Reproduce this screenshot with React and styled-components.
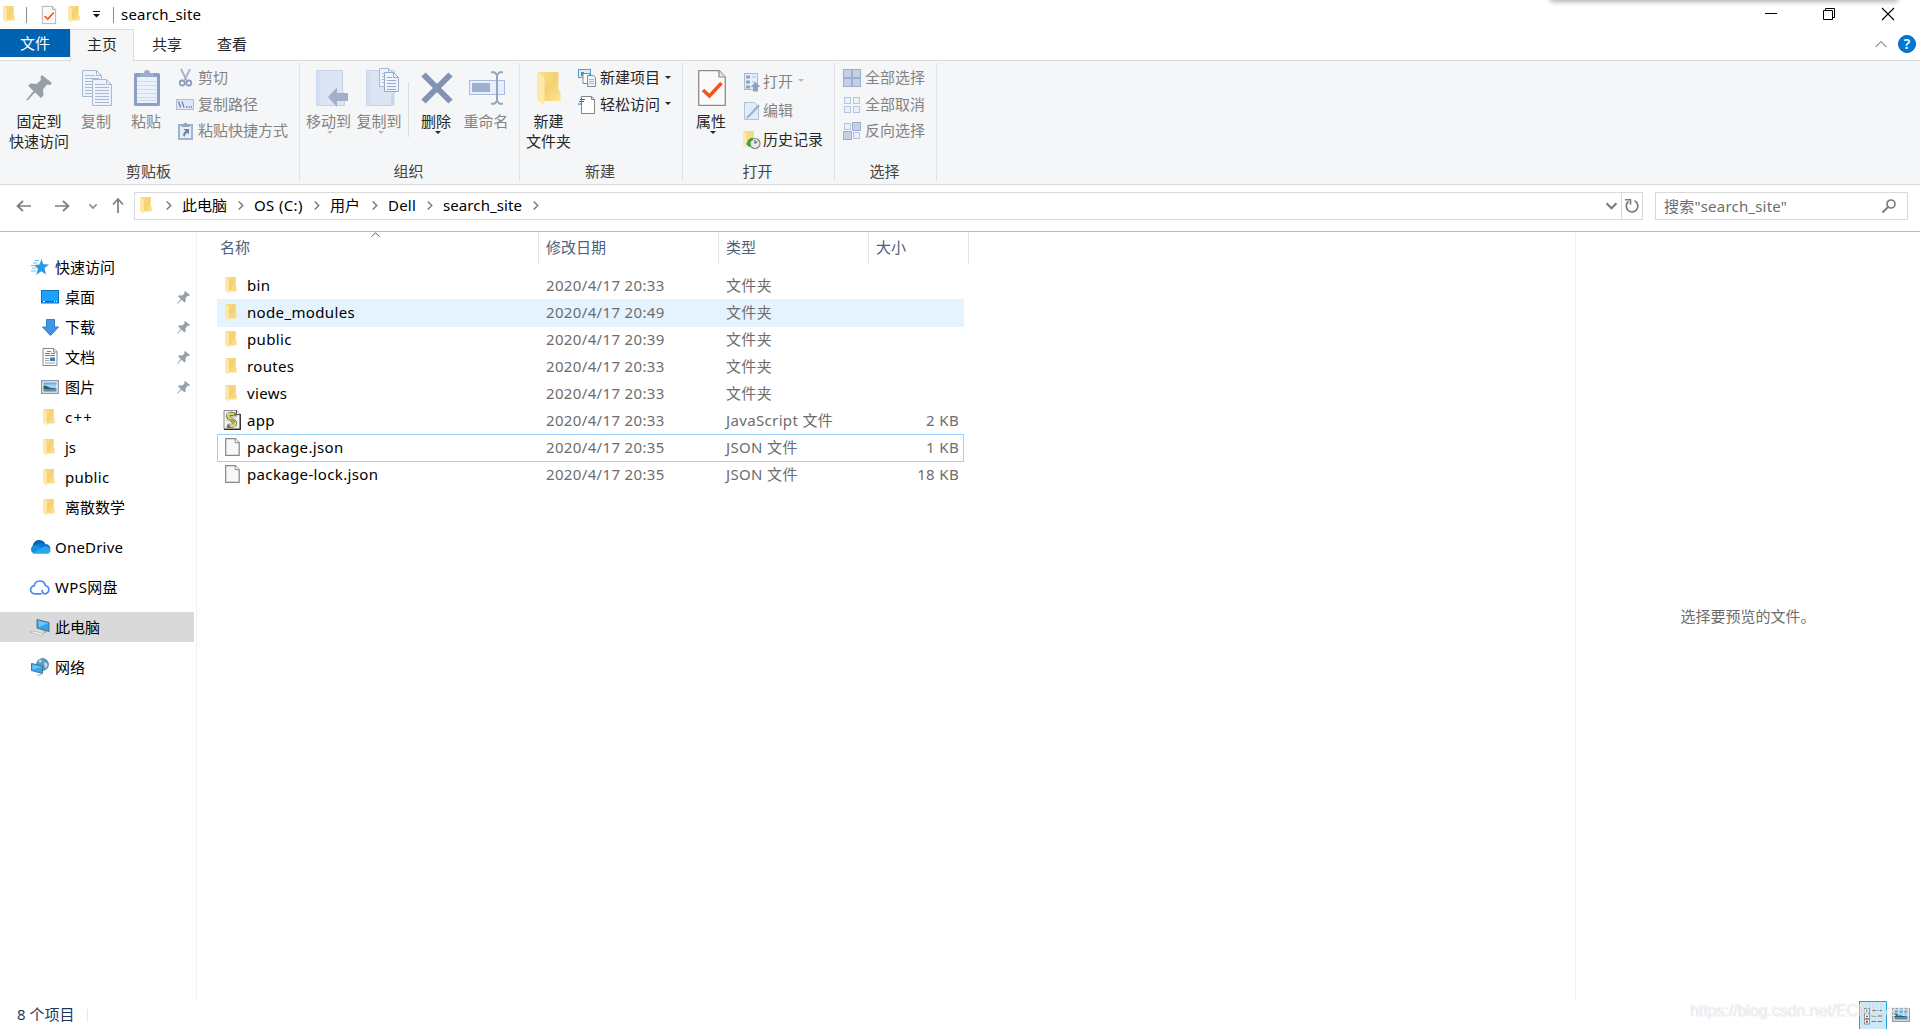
import React from 'react';
import styled, { createGlobalStyle } from 'styled-components';

const GlobalStyle = createGlobalStyle`
  * { box-sizing: border-box; }
  html, body, #root { height: 100%; }
  body {
    margin: 0;
    overflow: hidden;
    background: #fff;
    color: #000;
    font: 15px/20px "Noto Sans", "Noto Sans CJK SC", sans-serif;
    white-space: nowrap;
  }
`;

/* ---------- icons ---------- */

const Svg = styled.svg`
  display: block;
  flex: none;
  overflow: visible;
`;

const Icon = ({ w, h, box, children, ...rest }) => (
  <Svg width={w} height={h} viewBox={box || `0 0 ${w} ${h}`} fill="none" {...rest}>{children}</Svg>
);

const FolderIcon = ({ w = 12, h = 17 }) => (
  <Icon w={w} h={h} box="0 0 24 34" preserveAspectRatio="none">
    <defs>
      <linearGradient id="folderBack" x1="0" y1="0" x2="1" y2="1">
        <stop offset="0" stopColor="#fbdf8e" />
        <stop offset=".5" stopColor="#f3d171" />
        <stop offset="1" stopColor="#ffe394" />
      </linearGradient>
    </defs>
    <path d="M1 0h20.500v18l2 2v9H7L1 27z" fill="url(#folderBack)" />
    <path d="M0 0l7.500 5.500V34L0 28z" fill="#ffe9a8" />
  </Icon>
);

const PinIcon = ({ size = 26 }) => (
  <Icon w={size} h={size} box="0 0 26 26">
    <path d="M16 0l10 8-2 2-3-.5-4 5 .5 6-2.500 2.500-6-5.500-7.500 8L0 25l7.500-9L2 10.500l2.500-2 6 .5 4.500-4L14.500 2z" fill="#95a0a8" />
  </Icon>
);

const Sheet = ({ x = 0, y = 0, w = 19, h = 26, stroke = '#a9b9d4', fill = '#eef3fb' }) => (
  <g transform={`translate(${x} ${y})`}>
    <path d={`M.5 .5h${w - 6}l5 5v${h - 6}H.5z`} fill={fill} stroke={stroke} />
    <path d={`M${w - 5.5} .5v5h5`} stroke={stroke} />
    {[8, 11, 14, 17, 20, 23].filter(n => n < h - 2).map(n => (
      <path key={n} d={`M3 ${n + 0.5}h${w - 6}`} stroke={stroke} />
    ))}
    <path d={`M3 5.500h${w - 10}`} stroke={stroke} />
  </g>
);

const CopyIcon = () => (
  <Icon w={30} h={36}>
    <Sheet w={20} h={27} />
    <Sheet x={10} y={9} w={20} h={27} />
  </Icon>
);

const PasteIcon = () => (
  <Icon w={26} h={36}>
    <rect x="0" y="3" width="26" height="33" rx="1.500" fill="#8da0c3" />
    <rect x="3" y="7" width="20" height="26" fill="#eaf1fb" />
    {[11, 15, 19, 23, 27, 30].map(n => <path key={n} d={`M3 ${n}.500h20`} stroke="#cfdcef" />)}
    <path d="M6 3h4a3 3 0 0 1 6 0h4v4H6z" fill="#9cadc9" />
  </Icon>
);

const CutIcon = () => (
  <Icon w={13} h={18}>
    <path d="M2 0l5.500 11M11 0L5.500 11" stroke="#a3b3cd" strokeWidth="1.800" />
    <circle cx="3.200" cy="14" r="2.500" stroke="#8c9dbb" strokeWidth="1.800" />
    <circle cx="9.800" cy="14" r="2.500" stroke="#8c9dbb" strokeWidth="1.800" />
  </Icon>
);

const PathIcon = () => (
  <Icon w={18} h={11}>
    <rect x=".5" y=".5" width="17" height="10" fill="#dde7f6" stroke="#aebdd8" />
    <path d="M2.500 2.500l2 6M6 2.500l2 6" stroke="#6d7f9f" strokeWidth="1.200" />
    <path d="M10 8h1.200M12.400 8h1.200M14.800 8H16" stroke="#6d7f9f" strokeWidth="1.300" />
  </Icon>
);

const ShortcutIcon = () => (
  <Icon w={15} h={18}>
    <path d="M1 3h13v14H1z" fill="#e6eefa" stroke="#a3b3cf" strokeWidth="2" />
    <path d="M3.500 2H6a1.500 1.500 0 0 1 3 0h2.500v3h-8z" fill="#94a6c6" />
    <path d="M5.500 7H11v5.500l-1.800-1.800c-1.500 1-2.200 2-2.400 4L5 13.500c.2-2 1-3.400 2.500-4.500z" fill="#6f83a8" />
  </Icon>
);

const MoveToIcon = () => (
  <Icon w={32} h={36}>
    <path d="M.5 .5h26v21l2 2v12H.5z" fill="#dbe5f4" stroke="#c3d2e9" />
    <path d="M.5 .5l4 2v33h-4z" fill="#d3dff1" />
    <path d="M12 27l9-9.500V23h11v8H21v6z" fill="#a0b0cb" />
  </Icon>
);

const CopyToIcon = () => (
  <Icon w={33} h={38}>
    <path d="M.5 2.500h28v23l-2 2v10H.5z" fill="#dbe5f4" stroke="#c3d2e9" />
    <path d="M.5 2.500l4 2v33h-4z" fill="#d3dff1" />
    <path d="M25 37V27l2-3 1.500 1.500V37z" fill="#c9d7ec" />
    <Sheet x={13} y={0} w={15} h={19} />
    <Sheet x={18} y={4} w={15} h={20} stroke="#98aac8" />
  </Icon>
);

const DeleteIcon = () => (
  <Icon w={32} h={32}>
    <path d="M2.500 2.500l27 27M29.500 2.500l-27 27" stroke="#8192b2" strokeWidth="6" />
  </Icon>
);

const RenameIcon = () => (
  <Icon w={36} h={34}>
    <rect x=".5" y="9.500" width="35" height="14" fill="#e6effb" stroke="#a9bcdb" />
    <rect x="3" y="12" width="18" height="9" fill="#9fb0cd" />
    <path d="M22 1.200h3.500L28 4l2.500-2.800H34M28 3v28M22 32.800h3.500L28 30l2.500 2.800H34" stroke="#94a5c3" strokeWidth="2" />
  </Icon>
);

const NewItemIcon = () => (
  <Icon w={18} h={18}>
    <rect x=".5" y=".5" width="12" height="8" fill="#d9f0fb" stroke="#4ea0c4" />
    <path d="M3 3h3v4H3z" fill="#4b94a8" />
    <path d="M5 4.500h6.500v10H5z" fill="#fff" stroke="#8a8a8a" />
    <path d="M9.500 6.500h6l2 2v9h-8z" fill="#eaf4fd" stroke="#8a8a8a" />
    <path d="M11 10.500h5M11 12.500h5M11 14.500h5" stroke="#8fbfe6" />
  </Icon>
);

const EasyAccessIcon = () => (
  <Icon w={18} h={18}>
    <path d="M3.500 .5h10l3 3v14h-13z" fill="#fff" stroke="#858585" />
    <path d="M13.500 .5v3h3" stroke="#858585" />
    <path d="M2 3.500h5M1 5.500h5M0 8h4" stroke="#1979ca" strokeWidth="1.200" />
  </Icon>
);

const CheckSheetIcon = ({ w = 28, h = 36 }) => (
  <Icon w={w} h={h} box="0 0 28 36" preserveAspectRatio="none">
    <path d="M.7 .7h20.500l6.100 6.300v28.300H.7z" fill="#fafafa" stroke="#8b8b8b" strokeWidth="1.300" />
    <path d="M21 .7V7h6.300" fill="#e6e6e6" stroke="#8b8b8b" strokeWidth="1.200" />
    <path d="M5 20l6.500 6L23.500 13" stroke="#f0561a" strokeWidth="3.400" />
  </Icon>
);

const OpenIcon = () => (
  <Icon w={17} h={18}>
    <rect x=".5" y=".5" width="13" height="16" fill="#e6eefa" stroke="#a9b9d6" />
    <path d="M2 2.500h4v3H2zM2 7.500h4v3H2zM2 12.500h4v3H2z" fill="#8fa1c0" />
    <path d="M8 4h4M8 9h4" stroke="#a9b9d6" />
    <path d="M11.500 9l5 5H14v4.500H9V14H6.500z" fill="#8fa1c0" />
  </Icon>
);

const EditIcon = () => (
  <Icon w={17} h={18}>
    <path d="M.5 .5h10l4 4v13H.5z" fill="#e2ebf8" stroke="#b3c2dc" />
    <path d="M3 14.500L14 2.500l2 1.500L5 15.500l-3 1.500z" fill="#a0b1ce" />
  </Icon>
);

const HistoryIcon = () => (
  <Icon w={18} h={18}>
    <path d="M0 0h11v15H2L0 14z" fill="#f8da80" />
    <path d="M0 0l3.500 3v14.500L0 15z" fill="#ffeaae" />
    <circle cx="12" cy="12.500" r="5" fill="#e9e9e9" stroke="#868686" strokeWidth="1.200" />
    <path d="M12 9v3.500l2.500-2" stroke="#555" />
    <path d="M5 14c0-4 2-6 5-6" stroke="#2fa53a" strokeWidth="2.400" />
    <path d="M3 12.500h5l-1.500 4z" fill="#2fa53a" />
  </Icon>
);

const Tiles = ({ on }) => (
  <Icon w={18} h={18}>
    {[[0, 0], [9, 0], [0, 9], [9, 9]].map(([x, y], i) => {
      const big = on[i];
      return (
        <rect
          key={i}
          x={x + (big ? 0.5 : 1.5)}
          y={y + (big ? 0.5 : 1.5)}
          width={big ? 8 : 6}
          height={big ? 8 : 6}
          fill={big ? '#c3d0e5' : '#eaf1fb'}
          stroke={big ? '#9cafce' : '#b5c5df'}
        />
      );
    })}
  </Icon>
);

const Chevron = ({ dir = 'right', size = 10, color = '#7a7a7a', weight = 1.6 }) => {
  const d = {
    right: 'M3 .5l4.500 4.500L3 9.500',
    down: 'M.5 3l4.500 4.500L9.500 3',
    up: 'M.5 7.500L5 3l4.500 4.500',
  }[dir];
  return (
    <Icon w={size} h={size} box="0 0 10 10">
      <path d={d} stroke={color} strokeWidth={weight} />
    </Icon>
  );
};

const StarIcon = () => (
  <Icon w={18} h={16}>
    <path d="M10.500 0l1.800 5.300 5.700.2-4.400 3.600 1.400 6.400-4.800-3.200-5 3.700 1.700-5.900L3.500 6l5-.5z" fill="#2b9ae6" />
    <path d="M4 1.500h4M2 4h4.500M0 6.500h4M1 9h4M0 12h5" stroke="#6dbcf0" />
  </Icon>
);

const DesktopIcon = () => (
  <Icon w={18} h={14}>
    <rect x=".5" y=".5" width="17" height="12.500" fill="#1fa2ff" stroke="#1173b8" />
    <path d="M1 11.500h16" stroke="#0d629e" />
    <path d="M2 11.500h2M13 11.500h1M15 11.500h1" stroke="#fff" />
  </Icon>
);

const DownloadIcon = () => (
  <Icon w={17} h={17}>
    <path d="M4.500 .5h8v7.500h4l-8 8.500-8-8.500h4z" fill="#3f95e6" stroke="#2f7fca" />
  </Icon>
);

const DocumentIcon = () => (
  <Icon w={16} h={18}>
    <path d="M1 .5h11l3 3v14H1z" fill="#fdfdfd" stroke="#85898d" />
    <path d="M11.500 .5v3.500H15" stroke="#85898d" />
    <path d="M5 3.500h4M3 5.500h5M9 5.500h4M3 7.500h10" stroke="#2f8fd6" />
    <path d="M3 10.500h4M3 12.500h4M3 15h10" stroke="#9aa0a5" />
    <rect x="8" y="9.500" width="5" height="3.500" fill="#3c7fae" />
  </Icon>
);

const PictureIcon = () => (
  <Icon w={18} h={14}>
    <rect x=".7" y=".7" width="16.600" height="12.600" fill="#fff" stroke="#8f9499" strokeWidth="1.300" />
    <path d="M2.500 2.500h13v9h-13z" fill="#a5d0f7" />
    <path d="M2.500 2.500h13v2h-13z" fill="#6ba6ee" />
    <path d="M2.500 5.500c3 0 5 2 8 2.500l5 .5v1h-13z" fill="#2e6152" />
    <path d="M2.500 9.500h13v2h-13z" fill="#4d8fb5" />
  </Icon>
);

const OneDriveIcon = () => (
  <Icon w={21} h={14}>
    <path d="M3 9a6.500 6.500 0 0 1 12.500-4.800L9 10z" fill="#0364b8" />
    <path d="M15 4a5 5 0 0 1 5.500 5L9 10l-2-5.500c3-1.800 5-1.500 8-.5z" fill="#0f78d4" />
    <path d="M4 13.500A4.500 4.500 0 1 1 7 5l9 6z" fill="#1490df" />
    <path d="M3 13l10-6a5 5 0 0 1 4 0 4 4 0 0 1 3.500 3c0 2.500-1.500 3.700-3.500 3.700H4z" fill="#28a8ea" />
  </Icon>
);

const WpsIcon = () => (
  <Icon w={20} h={16}>
    <path d="M11.500 14.800H5a4 4 0 0 1-.8-8 5.700 5.700 0 0 1 11.200-.3A4.200 4.200 0 0 1 15 14.800a2.700 2.700 0 0 1-2.500-4" stroke="#4a86f0" strokeWidth="1.700" />
  </Icon>
);

const PcIcon = () => (
  <Icon w={20} h={17}>
    <path d="M7 .5l12 3v9L7 9z" fill="#2fa5f2" stroke="#56707f" />
    <path d="M8 1.500l10 2.700L9 8z" fill="#6cc5fa" />
    <path d="M0 13l4-1 10 3-3 1.500z" fill="#f5f6f7" stroke="#aeb5ba" strokeWidth=".8" />
    <path d="M13 11l2 .5v2.500" stroke="#78868e" />
  </Icon>
);

const NetworkIcon = () => (
  <Icon w={18} h={18}>
    <circle cx="11.500" cy="6.500" r="6" fill="#5b9ec0" stroke="#4784a3" strokeWidth=".8" />
    <path d="M8 2c2-1 3 0 2.500 1.500S8 4.500 7.500 4zM13 5c2-1 3.500 0 3.500 2s-1.500 3-2.500 3z" fill="#b8dcea" />
    <path d="M.5 5.500l11 2.500v7.500L.5 12.500z" fill="#35a6ee" stroke="#3f7796" />
    <path d="M1.500 6.800l9 2-9 3z" fill="#6cc5fa" />
    <path d="M5 17l5-1 1 1-3 1z" fill="#b9c1c5" />
  </Icon>
);

const ScriptIcon = () => (
  <Icon w={18} h={20}>
    <path d="M1 .5h12.500l3.500 4V19H1z" fill="#f6f6f6" stroke="#8c8c8c" />
    <path d="M1 19.300h16.300V4" stroke="#2b2b2b" strokeWidth="1.200" />
    <path d="M13.500 .5v4H17" fill="#fff" stroke="#444" />
    <path d="M13.500 6C11 3.500 5 3 5 6s7 4.500 7 7-5 3.500-8 2.500" stroke="#77775f" strokeWidth="4.400" />
    <path d="M11 4.500C8 3.500 5 4 5 6s7 4.500 7 7-3 3-5 3" stroke="#dcd65a" strokeWidth="2.600" />
    <path d="M3 3.500h3M9 6.500h5M3.500 10.500h3M5.500 14h4M11 16.500h3" stroke="#c9c9c4" strokeWidth="1.400" />
    <path d="M7 5.500h3M8 9l4 3" stroke="#6b6850" />
  </Icon>
);

const FileIcon = () => (
  <Icon w={15} h={18}>
    <path d="M.7 .7h9.500l4 4v12.600H.7z" fill="#f8f8f9" stroke="#84888b" strokeWidth="1.200" />
    <path d="M10.200 .7v4h4" fill="#fff" stroke="#84888b" />
  </Icon>
);

/* ---------- frame ---------- */

const Window = styled.div`
  display: flex;
  flex-direction: column;
  width: 1920px;
  height: 1029px;
  position: relative;
`;

const TitleBar = styled.header`
  display: flex;
  align-items: center;
  height: 29px;
  padding: 0 26px 0 3px;
`;

const TitleRule = styled.i`
  width: 1px;
  height: 16px;
  margin: 0 ${p => p.$right || 0}px 0 ${p => p.$left || 0}px;
  background: #8c8c8c;
`;

const QuickItem = styled.span`
  margin-right: ${p => p.$right}px;
`;

const Title = styled.h1`
  flex: 1;
  margin: 0;
  padding-bottom: 1px;
  font-size: 15px;
  font-weight: 400;
  letter-spacing: 0.2px;
`;

const WindowButtons = styled.div`
  display: flex;
  align-items: center;
  gap: 47px;
  padding-bottom: 1px;
`;

/* drop shadow of the panel docked above the screen edge */
const EdgeShadow = styled.div`
  position: absolute;
  top: -8px;
  left: 1552px;
  width: 344px;
  height: 8px;
  box-shadow: 0 0 5px 2px rgba(0, 0, 0, 0.3);
`;

const Tabs = styled.nav`
  display: flex;
  height: 32px;
  border-bottom: 1px solid #dadbdc;
`;

const FileTab = styled.div`
  width: 70px;
  height: 28px;
  padding-top: 4px;
  color: #fff;
  background: #0063b1;
  text-align: center;
`;

const Tab = styled.div`
  width: ${p => p.$width}px;
  height: 32px;
  padding-top: ${p => (p.$active ? 4 : 5)}px;
  color: #262626;
  text-align: center;
  ${p => p.$active && `
    border: 1px solid #dadbdc;
    border-bottom: 0;
    background: #f5f6f7;
  `}
`;

const TabTools = styled.div`
  display: flex;
  align-items: center;
  gap: 11px;
  margin-left: auto;
  padding: 0 4px 1px 0;
`;

const Help = styled.span`
  width: 18px;
  height: 18px;
  border-radius: 50%;
  border: 1px solid #0b5fae;
  background: #0078d7;
  color: #fff;
  font-size: 14px;
  font-weight: 600;
  line-height: 16px;
  text-align: center;
`;

/* ---------- ribbon ---------- */

const Ribbon = styled.section`
  display: flex;
  height: 124px;
  padding: 2px 0 3px;
  background: #f5f6f7;
  border-bottom: 1px solid #dadbdc;
`;

const Group = styled.div`
  display: flex;
  flex-direction: column;
  width: ${p => p.$width}px;
  border-right: 1px solid #e2e3e4;
`;

const GroupBody = styled.div`
  display: flex;
  flex: 1;
  padding-left: ${p => p.$left}px;
`;

const GroupLabel = styled.div`
  height: 20px;
  padding-right: 2px;
  color: #444;
  text-align: center;
`;

const BigButtonBox = styled.div`
  display: flex;
  flex-direction: column;
  align-items: center;
  width: ${p => p.$width}px;
  margin-right: ${p => p.$right || 0}px;
  padding-top: 7px;
  color: ${p => (p.$disabled ? '#838383' : '#262626')};
  text-align: center;
`;

const BigIcon = styled.div`
  display: flex;
  align-items: ${p => p.$align || 'flex-end'};
  height: 36px;
  margin-bottom: 5px;
  padding-left: ${p => p.$shift || 0}px;
`;

const BigLabel = styled.div`
  line-height: 20px;
`;

const Caret = styled.i`
  width: 0;
  height: 0;
  margin: ${p => p.$margin || 0};
  border: 3.5px solid transparent;
  border-top-color: ${p => (p.$disabled ? '#b9b9b9' : '#262626')};
  border-bottom: 0;
`;

const BigButton = ({ icon, lines, width, right, disabled, caret, align, shift }) => (
  <BigButtonBox $width={width} $right={right} $disabled={disabled}>
    <BigIcon $align={align} $shift={shift}>{icon}</BigIcon>
    {lines.map(line => <BigLabel key={line}>{line}</BigLabel>)}
    {caret && <Caret $disabled={disabled} $margin="0 0 0 3px" />}
  </BigButtonBox>
);

const BodyRule = styled.i`
  width: 1px;
  height: 55px;
  margin: 19px 3px 0 4px;
  background: #dcdddf;
`;

const SmallColumn = styled.div`
  padding: ${p => p.$top}px 0 0 ${p => p.$left}px;
`;

const SmallButton = styled.div`
  display: flex;
  align-items: center;
  height: ${p => p.$height}px;
  color: ${p => (p.$disabled ? '#838383' : '#262626')};
`;

const SmallIcon = styled.span`
  display: flex;
  justify-content: center;
  width: 18px;
  margin-right: ${p => p.$gap}px;
`;

const SmallLabel = styled.span`
  padding-bottom: 2px;
`;

const SmallButtons = ({ items, top, left, height, gap }) => (
  <SmallColumn $top={top} $left={left}>
    {items.map(({ icon, label, disabled, caret }) => (
      <SmallButton key={label} $height={height} $disabled={disabled}>
        <SmallIcon $gap={gap}>{icon}</SmallIcon>
        <SmallLabel>{label}</SmallLabel>
        {caret && <Caret $disabled={disabled} $margin="0 0 2px 5px" />}
      </SmallButton>
    ))}
  </SmallColumn>
);

const clipboardItems = [
  { icon: <CutIcon />, label: '剪切', disabled: true },
  { icon: <PathIcon />, label: '复制路径', disabled: true },
  { icon: <ShortcutIcon />, label: '粘贴快捷方式', disabled: true },
];

const newItems = [
  { icon: <NewItemIcon />, label: '新建项目', caret: true },
  { icon: <EasyAccessIcon />, label: '轻松访问', caret: true },
];

const openItems = [
  { icon: <OpenIcon />, label: '打开', disabled: true, caret: true },
  { icon: <EditIcon />, label: '编辑', disabled: true },
  { icon: <HistoryIcon />, label: '历史记录' },
];

const selectItems = [
  { icon: <Tiles on={[1, 1, 1, 1]} />, label: '全部选择', disabled: true },
  { icon: <Tiles on={[0, 0, 0, 0]} />, label: '全部取消', disabled: true },
  { icon: <Tiles on={[0, 1, 1, 0]} />, label: '反向选择', disabled: true },
];

/* ---------- address bar ---------- */

const AddressRow = styled.div`
  display: flex;
  align-items: center;
  height: 47px;
  padding: 0 12px 5px 16px;
  border-bottom: 1px solid #b9b9b9;
`;

const NavIcon = styled.span`
  width: ${p => p.$width}px;
`;

const AddressBox = styled.div`
  display: flex;
  align-items: center;
  width: 1509px;
  height: 28px;
  padding-left: 5px;
  border: 1px solid #d9d9d9;
`;

const Crumb = styled.span`
  width: ${p => p.$width}px;
  padding-bottom: 2px;
  letter-spacing: ${p => p.$spacing || 0}px;
`;

const CrumbArrow = styled.span`
  width: 18px;
`;

const AddressFill = styled.span`
  flex: 1;
`;

const RefreshCell = styled.div`
  display: flex;
  align-items: center;
  justify-content: center;
  width: 21px;
  height: 26px;
  margin-left: 4px;
  border-left: 1px solid #d9d9d9;
`;

const SearchBox = styled.div`
  display: flex;
  align-items: center;
  justify-content: space-between;
  width: 253px;
  height: 28px;
  margin-left: 12px;
  padding: 0 11px 0 8px;
  border: 1px solid #d9d9d9;
  color: #6d6d6d;
  letter-spacing: 0.2px;
`;

const crumbs = [
  ['此电脑', 54],
  ['OS (C:)', 58, 0.35],
  ['用户', 40],
  ['Dell', 37, 0.2],
  ['search_site', 88, 0.1],
];

/* ---------- body ---------- */

const Main = styled.div`
  display: flex;
  flex: 1;
`;

const NavPane = styled.aside`
  width: 197px;
  height: 769px;
  padding-top: 20px;
  border-right: 1px solid #f0f0f0;
`;

const NavRow = styled.div`
  display: flex;
  align-items: center;
  width: 194px;
  height: 30px;
  margin-top: ${p => (p.$gap ? 10 : 0)}px;
  padding: 0 4px 0 ${p => (p.$nested ? 41 : 30)}px;
  background: ${p => (p.$selected ? '#d9d9d9' : 'transparent')};
`;

const NavGlyph = styled.span`
  display: flex;
  justify-content: ${p => (p.$left ? 'flex-start' : 'center')};
  width: ${p => (p.$nested ? 24 : 25)}px;
  padding-right: ${p => (p.$nested ? 6 : 5)}px;
  padding-left: ${p => (p.$left ? 2 : 0)}px;
`;

const NavName = styled.span`
  flex: 1;
  padding-bottom: 1px;
  letter-spacing: ${p => p.$spacing || 0}px;
`;

const navItems = [
  { name: '快速访问', icon: <StarIcon /> },
  { name: '桌面', icon: <DesktopIcon />, nested: true, pinned: true },
  { name: '下载', icon: <DownloadIcon />, nested: true, pinned: true },
  { name: '文档', icon: <DocumentIcon />, nested: true, pinned: true },
  { name: '图片', icon: <PictureIcon />, nested: true, pinned: true },
  { name: 'c++', icon: <FolderIcon />, nested: true, left: true, spacing: 1.2 },
  { name: 'js', icon: <FolderIcon />, nested: true, left: true },
  { name: 'public', icon: <FolderIcon />, nested: true, left: true, spacing: 0.3 },
  { name: '离散数学', icon: <FolderIcon />, nested: true, left: true },
  { name: 'OneDrive', icon: <OneDriveIcon />, gap: true, spacing: 0.2 },
  { name: 'WPS网盘', icon: <WpsIcon />, gap: true, spacing: 0.3 },
  { name: '此电脑', icon: <PcIcon />, gap: true, selected: true },
  { name: '网络', icon: <NetworkIcon />, gap: true },
];

const FileList = styled.section`
  flex: 1;
  padding-left: 20px;
`;

const HeaderRow = styled.div`
  display: flex;
  height: 32px;
  margin-bottom: 8px;
  color: #4c607a;
`;

const HeaderCell = styled.div`
  position: relative;
  width: ${p => p.$width}px;
  padding: 5px 0 0 ${p => p.$left || 7}px;
  border-right: 1px solid #e5e5e5;
`;

const SortMark = styled.span`
  position: absolute;
  top: -2px;
  left: 154px;
`;

const Row = styled.div`
  display: grid;
  grid-template-columns: 29px 299px 180px 150px 83px;
  align-items: center;
  width: 747px;
  height: 28px;
  margin-bottom: -1px;
  padding: 0 0 2px 1px;
  color: #6d6d6d;
  letter-spacing: 0.35px;
  background: ${p => (p.$hover ? '#e5f3ff' : 'transparent')};
  box-shadow: ${p => (p.$focused ? 'inset 0 0 0 1px #99d1ff' : 'none')};
`;

const FileGlyph = styled.span`
  display: flex;
  padding-left: ${p => p.$left}px;
`;

const FileName = styled.span`
  color: #000;
`;

const SizeCell = styled.span`
  text-align: right;
`;

const FOLDER = '文件夹';
const files = [
  { name: 'bin', date: '2020/4/17 20:33', type: FOLDER },
  { name: 'node_modules', date: '2020/4/17 20:49', type: FOLDER, hover: true },
  { name: 'public', date: '2020/4/17 20:39', type: FOLDER },
  { name: 'routes', date: '2020/4/17 20:33', type: FOLDER },
  { name: 'views', date: '2020/4/17 20:33', type: FOLDER },
  { name: 'app', date: '2020/4/17 20:33', type: 'JavaScript 文件', size: '2 KB', icon: <ScriptIcon />, left: 5 },
  { name: 'package.json', date: '2020/4/17 20:35', type: 'JSON 文件', size: '1 KB', icon: <FileIcon />, left: 7, focused: true },
  { name: 'package-lock.json', date: '2020/4/17 20:35', type: 'JSON 文件', size: '18 KB', icon: <FileIcon />, left: 7 },
];

const Preview = styled.aside`
  display: flex;
  align-items: center;
  justify-content: center;
  width: 345px;
  height: 769px;
  padding-bottom: 2px;
  border-left: 1px solid #f3f3f3;
  color: #6d6d6d;
`;

const StatusBar = styled.footer`
  display: flex;
  align-items: center;
  height: 28px;
  padding: 0 10px 0 17px;
  color: #1e395b;
`;

const ItemCount = styled.span`
  padding-bottom: 2px;
`;

const StatusRule = styled.i`
  width: 1px;
  height: 13px;
  margin: 0 auto 0 13px;
  background: #e8e8e8;
`;

const DetailsToggle = styled.span`
  display: flex;
  align-items: center;
  justify-content: center;
  width: 28px;
  height: 28px;
  margin-right: 5px;
  border: 1px solid #26a0da;
  border-bottom: 0;
  background: #cbe8f6;
`;

const Watermark = styled.div`
  position: absolute;
  right: 10px;
  bottom: 8px;
  color: rgba(255, 255, 255, 0.75);
  font: 16px/20px "Liberation Sans", Arial, sans-serif;
  letter-spacing: -0.08px;
  text-shadow: 0 0 1px rgba(0, 0, 0, 0.2), 1px 1px 0 rgba(0, 0, 0, 0.05);
`;

export default function App() {
  return (
    <Window>
      <GlobalStyle />
      <TitleBar>
        <FolderIcon />
        <TitleRule $left={11} $right={15} />
        <QuickItem $right={12}><CheckSheetIcon w={14} h={18} /></QuickItem>
        <QuickItem $right={13}><FolderIcon /></QuickItem>
        <QuickItem $right={13}>
          <Icon w={7} h={7}>
            <path d="M0 .5h7" stroke="#111" />
            <path d="M0 3h7L3.500 6.500z" fill="#111" />
          </Icon>
        </QuickItem>
        <TitleRule $right={7} />
        <Title>search_site</Title>
        <WindowButtons>
          <Icon w={12} h={12}><path d="M1 5.500h12" stroke="#000" /></Icon>
          <Icon w={12} h={12}>
            <path d="M.5 2.500h9v9h-9zM2.500 2.500v-2h9v9h-2" stroke="#000" />
          </Icon>
          <Icon w={12} h={12}><path d="M0 0l12 12M12 0L0 12" stroke="#000" strokeWidth="1.100" /></Icon>
        </WindowButtons>
      </TitleBar>
      <EdgeShadow />

      <Tabs>
        <FileTab>文件</FileTab>
        <Tab $active $width={64}>主页</Tab>
        <Tab $width={66}>共享</Tab>
        <Tab $width={64}>查看</Tab>
        <TabTools>
          <Chevron dir="up" size={12} color="#9a9a9a" weight={1} />
          <Help>?</Help>
        </TabTools>
      </Tabs>

      <Ribbon>
        <Group $width={300}>
          <GroupBody $left={5}>
            <BigButton width={68} align="center" icon={<PinIcon />} lines={['固定到', '快速访问']} />
            <BigButton width={46} shift={2} icon={<CopyIcon />} lines={['复制']} disabled />
            <BigButton width={54} shift={2} icon={<PasteIcon />} lines={['粘贴']} disabled />
            <SmallButtons items={clipboardItems} top={2} left={3} height={26.5} gap={4} />
          </GroupBody>
          <GroupLabel>剪贴板</GroupLabel>
        </Group>

        <Group $width={220}>
          <GroupBody $left={5}>
            <BigButton width={47} right={2} shift={6} icon={<MoveToIcon />} lines={['移动到']} disabled caret />
            <BigButton width={50} shift={6} icon={<CopyToIcon />} lines={['复制到']} disabled caret />
            <BodyRule />
            <BigButton width={48} right={1} shift={2} align="center" icon={<DeleteIcon />} lines={['删除']} caret />
            <BigButton width={50} shift={2} align="center" icon={<RenameIcon />} lines={['重命名']} disabled />
          </GroupBody>
          <GroupLabel>组织</GroupLabel>
        </Group>

        <Group $width={163}>
          <GroupBody $left={5}>
            <BigButton width={47} icon={<FolderIcon w={24} h={34} />} lines={['新建', '文件夹']} />
            <SmallButtons items={newItems} top={2} left={6} height={26.5} gap={4} />
          </GroupBody>
          <GroupLabel>新建</GroupLabel>
        </Group>

        <Group $width={152}>
          <GroupBody $left={8}>
            <BigButton width={40} shift={2} icon={<CheckSheetIcon />} lines={['属性']} caret />
            <SmallButtons items={openItems} top={4} left={12} height={29} gap={2} />
          </GroupBody>
          <GroupLabel>打开</GroupLabel>
        </Group>

        <Group $width={102}>
          <GroupBody $left={8}>
            <SmallButtons items={selectItems} top={2} left={0} height={26.5} gap={4} />
          </GroupBody>
          <GroupLabel>选择</GroupLabel>
        </Group>
      </Ribbon>

      <AddressRow>
        <NavIcon $width={39}>
          <Icon w={15} h={12}><path d="M7 1L1.500 6 7 11M1.500 6H15" stroke="#7d7d7d" strokeWidth="1.700" /></Icon>
        </NavIcon>
        <NavIcon $width={34}>
          <Icon w={15} h={12}><path d="M8 1l5.500 5L8 11M13.500 6H0" stroke="#7d7d7d" strokeWidth="1.700" /></Icon>
        </NavIcon>
        <NavIcon $width={23}><Chevron dir="down" size={8} weight={2} color="#8a8a8a" /></NavIcon>
        <NavIcon $width={22}>
          <Icon w={12} h={15}><path d="M1 6.500l5-5.500 5 5.500M6 1v14" stroke="#7d7d7d" strokeWidth="1.700" /></Icon>
        </NavIcon>
        <AddressBox>
          <FolderIcon />
          <NavIcon $width={12} />
          {crumbs.map(([name, width, spacing]) => (
            <React.Fragment key={name}>
              <CrumbArrow><Chevron size={9} /></CrumbArrow>
              <Crumb $width={width} $spacing={spacing}>{name}</Crumb>
            </React.Fragment>
          ))}
          <Chevron size={9} />
          <AddressFill />
          <Chevron dir="down" size={11} weight={1.9} />
          <RefreshCell>
            <Icon w={14} h={14}>
              <path d="M9.500 1.800A5.800 5.800 0 1 1 3.500 2.500" stroke="#7d7d7d" strokeWidth="1.700" />
              <path d="M0 .8h5.500v5" stroke="#7d7d7d" strokeWidth="1.600" />
            </Icon>
          </RefreshCell>
        </AddressBox>
        <SearchBox>
          <span>搜索"search_site"</span>
          <Icon w={14} h={14}>
            <circle cx="9" cy="5" r="4" stroke="#7d7d7d" strokeWidth="1.700" />
            <path d="M6 8L.5 13.500" stroke="#7d7d7d" strokeWidth="2" />
          </Icon>
        </SearchBox>
      </AddressRow>

      <Main>
        <NavPane>
          {navItems.map(({ name, icon, nested, left, pinned, gap, selected, spacing }) => (
            <NavRow key={name} $nested={nested} $gap={gap} $selected={selected}>
              <NavGlyph $nested={nested} $left={left}>{icon}</NavGlyph>
              <NavName $spacing={spacing}>{name}</NavName>
              {pinned && <PinIcon size={13} />}
            </NavRow>
          ))}
        </NavPane>

        <FileList>
          <HeaderRow>
            <HeaderCell $width={322} $left={3}>
              名称
              <SortMark><Chevron dir="up" size={9} weight={1.1} color="#555" /></SortMark>
            </HeaderCell>
            <HeaderCell $width={180}>修改日期</HeaderCell>
            <HeaderCell $width={150}>类型</HeaderCell>
            <HeaderCell $width={100}>大小</HeaderCell>
          </HeaderRow>
          {files.map(({ name, date, type, size, icon, left, hover, focused }) => (
            <Row key={name} $hover={hover} $focused={focused}>
              <FileGlyph $left={left || 7}>{icon || <FolderIcon />}</FileGlyph>
              <FileName>{name}</FileName>
              <span>{date}</span>
              <span>{type}</span>
              <SizeCell>{size}</SizeCell>
            </Row>
          ))}
        </FileList>

        <Preview>选择要预览的文件。</Preview>
      </Main>

      <StatusBar>
        <ItemCount>8 个项目</ItemCount>
        <StatusRule />
        <DetailsToggle>
          <Icon w={18} h={16}>
            {[0, 5.5, 11].map((y, i) => (
              <g key={y}>
                <rect x=".5" y={y + 0.5} width="5" height="4.500" fill="#fff" stroke="#8f9499" />
                <path d={`M2 ${y + 2.7}h2`} stroke={['#3c7fae', '#5b8a3c', '#c0392b'][i]} strokeWidth="2" />
                <path d={`M7.500 ${y + 2.5}h4.500M13.500 ${y + 2.5}h4.500`} stroke="#777" />
              </g>
            ))}
          </Icon>
        </DetailsToggle>
        <PictureIcon />
      </StatusBar>
      <Watermark>https://blog.csdn.net/ECNUyzm</Watermark>
    </Window>
  );
}
